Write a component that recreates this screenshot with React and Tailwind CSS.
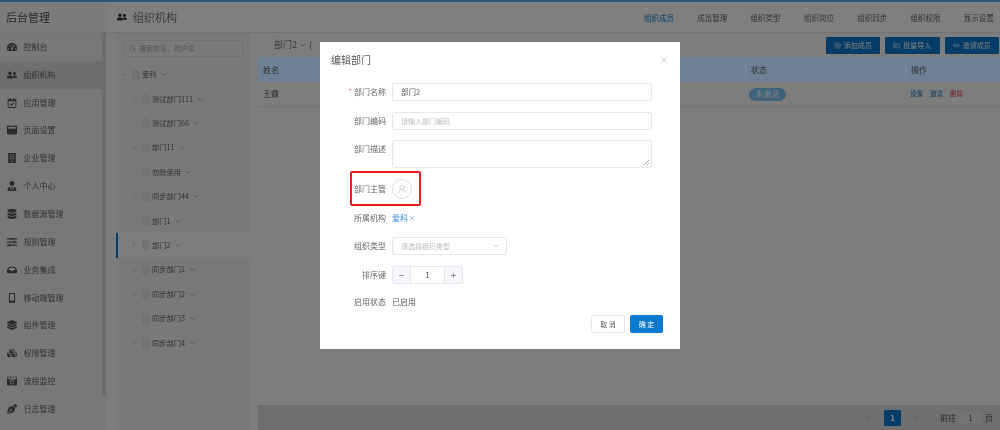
import React from "react";
import { X, ChevronDown, ChevronRight, Search, UserRound, Plus, Minus, Link2, ChevronLeft, File, CirclePlus, FolderInput } from "lucide-react";
import { FaTachometerAlt, FaUserFriends, FaRegCalendarCheck, FaWindowMaximize, FaBuilding, FaUserTie, FaDatabase, FaSlidersH, FaInbox, FaMobileAlt, FaLayerGroup, FaCubes, FaCameraRetro, FaPenNib } from "react-icons/fa";

const menu = [
  ["控制台", FaTachometerAlt], ["组织机构", FaUserFriends], ["应用管理", FaRegCalendarCheck], ["页面设置", FaWindowMaximize],
  ["企业管理", FaBuilding], ["个人中心", FaUserTie], ["数据源管理", FaDatabase], ["规则管理", FaSlidersH],
  ["业务集成", FaInbox], ["移动端管理", FaMobileAlt], ["组件管理", FaLayerGroup], ["权限管理", FaCubes],
  ["流程监控", FaCameraRetro], ["日志管理", FaPenNib],
];
const tree = [
  ["爱科", 0, true], ["测试部门111", 1, true], ["测试部门66", 1, false], ["部门11", 1, true], ["勿除使用", 1, false], ["同步部门44", 1, true],
  ["部门1", 1, false], ["部门2", 1, true], ["同步部门1", 1, true], ["同步部门2", 1, true], ["同步部门3", 1, false], ["同步部门4", 1, true],
];
const tabs = ["组织成员", "成员管理", "组织类型", "组织岗位", "组织同步", "组织权限", "显示设置"];

function Label({ children, req }) {
  return (
    <div className="w-[66px] shrink-0 text-right text-[8px] leading-[12px] text-[#666]">
      {req && <span className="text-[#f56c6c] mr-[2px]">*</span>}
      {children}
    </div>
  );
}

export default function App() {
  return (
    <div className="w-[1000px] h-[430px] overflow-hidden bg-[#7e7e7e]">
      <div className="relative w-[1000px] h-[430px] flex flex-col bg-white blur-[0.5px] font-['Noto_Sans_CJK_SC','Liberation_Sans',sans-serif] text-[#444]">
        <div className="h-[2px] bg-[#5aa8e8] shrink-0" />
        <header className="h-[31px] shrink-0 flex border-b border-[#e4e6ea] bg-white">
          <div className="w-[106px] pl-[6px] flex items-center text-[11px] text-[#555] bg-[#f8f8f8]">后台管理</div>
          <div className="w-[538px] pl-[11px] flex items-center gap-[6px] text-[11px] text-[#777]">
            <FaUserFriends className="w-[10px] h-[10px] text-[#333]" />
            <span>组织机构</span>
          </div>
          <nav className="flex-1 flex gap-[23.3px]">
            {tabs.map((t, i) => (
              <div key={t} className={`h-[32px] flex items-center text-[7.5px] ${i === 0 ? "text-[#0a7ad0] border-b border-[#0a7ad0]" : "text-[#666]"}`}>{t}</div>
            ))}
          </nav>
        </header>
        <div className="flex-1 flex min-h-0">
          <aside className="w-[102px] shrink-0 bg-[#f0f0f0]">
            {menu.map(([t, I], i) => (
              <div key={t} className={`h-[27.85px] pl-[6px] flex items-center gap-[7px] text-[8px] text-[#666] ${i === 1 ? "bg-[#dcdcdc]" : ""}`}>
                <I className="w-[10px] h-[10px] ml-[0.5px] text-[#555] shrink-0" />
                <span>{t}</span>
              </div>
            ))}
          </aside>
          <div className="w-[4px] shrink-0 bg-[#f0f0f0]">
            <div className="h-[362px] bg-[#d8dbe2]" />
          </div>
          <div className="w-[10px] shrink-0 bg-[#f9f9f9]" />
          <section className="w-[134px] shrink-0 bg-[#f2f2f2] relative">
            <div className="mx-[7px] mt-[7px] h-[17px] rounded-[2px] border border-[#e0e2e6] bg-[#f5f5f5] flex items-center pl-[5px] gap-[3px] text-[7px] text-[#aaa]">
              <Search className="w-[7px] h-[7px]" />
              <span>搜索姓名、用户名</span>
            </div>
            <div className="mt-[5.5px]">
              {tree.map(([t, lv, arrow], i) => (
                <div key={t} className={`relative h-[24.4px] flex items-center text-[7.25px] text-[#666] ${i === 7 ? "bg-[#fafafa]" : ""} ${lv === 0 ? "pl-[5px]" : "pl-[15px]"}`}>
                  {i === 7 && <div className="absolute left-0 top-0 bottom-0 w-[2px] bg-[#0a7ad0]" />}
                  <span className="w-[6px] h-[6px] flex items-center justify-center mr-[4px]">
                    {arrow && (lv === 0 ? <ChevronDown className="w-[6px] h-[6px] text-[#999]" /> : <ChevronRight className="w-[6px] h-[6px] text-[#999]" />)}
                  </span>
                  <File className="w-[10px] h-[10px] text-[#ddd] fill-[#e6e6e6] mr-[1px]" />
                  <span>{t}</span>
                  <ChevronDown className="w-[9px] h-[9px] ml-[3px] text-[#999]" />
                </div>
              ))}
            </div>
          </section>
          <main className="flex-1 flex flex-col bg-[#fbfbfb] pl-[8px]">
            <div className="h-[24px] shrink-0 flex items-center justify-between">
              <div className="pl-[16px] text-[9px] text-[#777] flex items-center gap-[2px]">
                <span>部门2</span><ChevronDown className="w-[8px] h-[8px]" /><span>(</span>
              </div>
              <div className="flex gap-[5px] mr-[1px]">
                {[["添加成员", CirclePlus], ["批量导入", FolderInput], ["邀请成员", Link2]].map(([t, I]) => (
                  <div key={t} className="w-[54.5px] h-[17px] rounded-[1px] bg-[#0a7ad0] text-white text-[7px] flex items-center justify-center gap-[3px]">
                    <I className="w-[7px] h-[7px]" />{t}
                  </div>
                ))}
              </div>
            </div>
            <div className="relative z-10 h-[25px] shrink-0 flex items-center bg-[#6e8093] text-[8px] text-[#2e2e2e]">
              <div className="w-[487px] pl-[5px]">姓名</div>
              <div className="w-[160px] pl-[5px] border-l border-[#73879a] h-full flex items-center">状态</div>
              <div className="flex-1 pl-[5px] border-l border-[#73879a] h-full flex items-center">操作</div>
            </div>
            <div className="h-[25px] shrink-0 flex items-center border-b border-[#e4e6ea] text-[8px] text-[#555]">
              <div className="w-[487px] pl-[5px]">王霖</div>
              <div className="w-[160px] pl-[4px]">
                <span className="inline-flex w-[37px] h-[13px] rounded-full bg-[#7dc4f5] text-white text-[8px] items-center justify-center">未激活</span>
              </div>
              <div className="flex-1 pl-[5px] flex gap-[7px] text-[6.5px] text-[#0a6ab0]">
                <span>设置</span><span>邀请</span><span className="text-[#e0484d]">删除</span>
              </div>
            </div>
            <div className="flex-1" />
            <div className="h-[25px] shrink-0 bg-[#dedede] flex items-center justify-end text-[8px] text-[#555]">
              <ChevronLeft className="w-[8px] h-[8px] text-[#aaa] mr-[11px]" />
              <span className="w-[17px] h-[16px] rounded-[1px] bg-[#0a7ad0] text-white flex items-center justify-center font-bold">1</span>
              <ChevronRight className="w-[8px] h-[8px] text-[#aaa] ml-[10px] mr-[21px]" />
              <span>前往</span>
              <span className="w-[23px] h-[14px] mx-[3px] rounded-[2px] bg-[#e8e8e8] flex items-center justify-center">1</span>
              <span className="mr-[7px]">页</span>
            </div>
          </main>
        </div>

        <div className="absolute inset-0 bg-black/50" />

        <div className="absolute z-20 left-[320px] top-[42px] w-[360px] h-[307px] bg-white flex flex-col text-[#555]">
          <div className="h-[41px] shrink-0 pl-[11px] pr-[12px] pt-[11px] flex items-start justify-between">
            <span className="text-[10px] leading-[14px] text-[#555]">编辑部门</span>
            <X className="w-[8px] h-[8px] mt-[3px] text-[#aaa]" />
          </div>
          <div className="h-[18px] flex items-center gap-[6px]">
            <Label req>部门名称</Label>
            <div className="w-[260px] h-[18px] rounded-[2px] border border-[#e4e7ed] pl-[8px] text-[7.5px] flex items-center">部门2</div>
          </div>
          <div className="h-[18px] mt-[11px] flex items-center gap-[6px]">
            <Label>部门编码</Label>
            <div className="w-[260px] h-[18px] rounded-[2px] border border-[#e4e7ed] pl-[8px] text-[7px] text-[#bbb] flex items-center">请输入部门编码</div>
          </div>
          <div className="h-[28px] mt-[10px] flex items-start gap-[6px]">
            <div className="pt-[3px]"><Label>部门描述</Label></div>
            <div className="relative w-[260px] h-[28px] rounded-[2px] border border-[#e4e7ed]">
              <svg className="absolute right-[1px] bottom-[1px]" width="7" height="7" viewBox="0 0 7 7"><path d="M1 6L6 1M4 6L6 4" stroke="#888" strokeWidth="0.7" /></svg>
            </div>
          </div>
          <div className="relative h-[35px] mt-[3px] flex items-center gap-[6px]">
            <Label>部门主管</Label>
            <div className="w-[20px] h-[20px] rounded-full border border-[#ddd] flex items-center justify-center">
              <UserRound className="w-[10px] h-[10px] text-[#bbb]" strokeWidth={1.5} />
            </div>
            <div className="absolute left-[30px] top-0 w-[71px] h-[35px] rounded-[2px] border-2 border-[#f01c1c]" />
          </div>
          <div className="h-[12px] mt-[6px] flex items-center gap-[6px]">
            <Label>所属机构</Label>
            <span className="text-[8px] text-[#3a8ee6] flex items-center gap-[1px]">爱科<X className="w-[6px] h-[6px]" /></span>
          </div>
          <div className="h-[18px] mt-[13px] flex items-center gap-[6px]">
            <Label>组织类型</Label>
            <div className="w-[115px] h-[18px] rounded-[2px] border border-[#e4e7ed] pl-[8px] pr-[6px] text-[7px] text-[#bbb] flex items-center justify-between">
              <span>请选择组织类型</span><ChevronDown className="w-[8px] h-[8px]" />
            </div>
          </div>
          <div className="h-[18px] mt-[11px] flex items-center gap-[6px]">
            <Label>排序键</Label>
            <div className="w-[71px] h-[18px] rounded-[2px] border border-[#e4e7ed] flex items-center text-[8px]">
              <div className="w-[18px] h-full bg-[#f5f7fa] flex items-center justify-center border-r border-[#e4e7ed]"><Minus className="w-[7px] h-[7px]" /></div>
              <div className="flex-1 text-center">1</div>
              <div className="w-[18px] h-full bg-[#f5f7fa] flex items-center justify-center border-l border-[#e4e7ed]"><Plus className="w-[7px] h-[7px]" /></div>
            </div>
          </div>
          <div className="h-[12px] mt-[12px] flex items-center gap-[6px]">
            <Label>启用状态</Label>
            <span className="text-[8px]">已启用</span>
          </div>
          <div className="mt-[7px] pr-[17px] flex justify-end gap-[5px]">
            <div className="w-[34px] h-[18px] rounded-[2px] border border-[#e4e7ed] text-[7px] flex items-center justify-center">取 消</div>
            <div className="w-[33px] h-[18px] rounded-[2px] bg-[#0a7ad0] text-white text-[7px] flex items-center justify-center">确 定</div>
          </div>
        </div>
      </div>
    </div>
  );
}
